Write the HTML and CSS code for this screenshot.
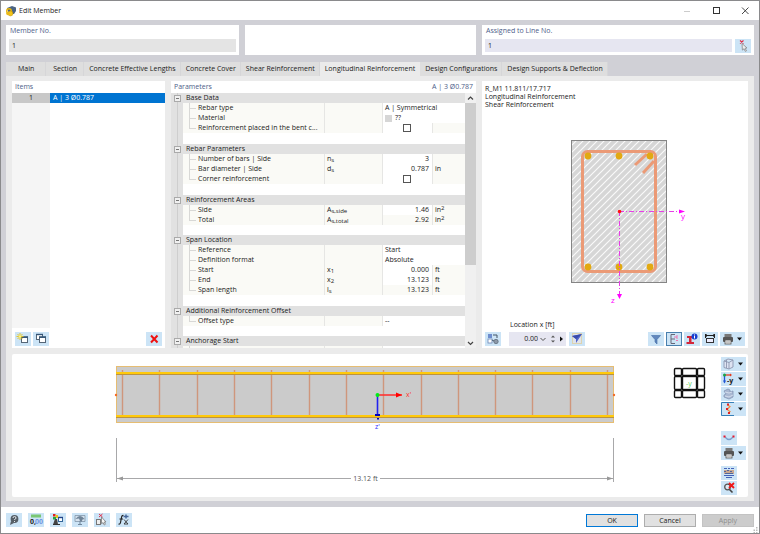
FILE: index.html
```html
<!DOCTYPE html>
<html lang="en">
<head>
<meta charset="utf-8">
<title>Edit Member</title>
<link rel="stylesheet" href="styles.css">
</head>
<body>
<svg class="defs" aria-hidden="true">
  <symbol id="printer" viewBox="0 0 16 14">
    <rect x="4.500" y="2" width="7" height="3" fill="#777"/>
    <rect x="3" y="5" width="10" height="5" rx="1" fill="#555"/>
    <rect x="5" y="8" width="6" height="4" fill="#eee" stroke="#555" stroke-width=".8"/>
    <path d="M6 10h4" stroke="#888" stroke-width=".8"/>
  </symbol>
  <symbol id="caret" viewBox="0 0 8 14"><path d="M1 5.500h5L3.500 8.500z" fill="#111"/></symbol>
  <symbol id="window" viewBox="0 0 16 14">
    <rect x="6.500" y="5.500" width="6" height="5" fill="#fff" stroke="#567" stroke-width="1"/>
    <path d="M6 5h7" stroke="#357" stroke-width="1.600"/>
  </symbol>
</svg>

<div class="dialog">
  <header class="titlebar">
    <svg class="app-icon" viewBox="0 0 12 12">
      <path d="M2 3L7 1l4 1.500V6L9 9H4z" fill="#4b6484"/>
      <circle cx="4" cy="6" r="2.300" fill="none" stroke="#e6b40a" stroke-width="1.400"/>
      <circle cx="5.500" cy="8.500" r="2.400" fill="#f2c418" stroke="#c99706" stroke-width=".6"/>
      <circle cx="3" cy="8.500" r="1.800" fill="#e9b91a"/>
    </svg>
    <h1>Edit Member</h1>
    <div class="window-buttons">
      <button aria-label="Minimize"><svg viewBox="0 0 10 10"><path d="M2 5.500h6" stroke="#ccc"/></svg></button>
      <button aria-label="Maximize"><svg viewBox="0 0 10 10"><rect x="2.500" y="1.500" width="6" height="6" fill="none" stroke="#333"/></svg></button>
      <button aria-label="Close"><svg viewBox="0 0 10 10"><path d="M2 1.500l6.500 6.500M8.500 1.500L2 8" stroke="#333" stroke-width=".9"/></svg></button>
    </div>
  </header>

  <main class="content">
    <div class="cards">
      <div class="card">
        <label for="member">Member No.</label>
        <div class="field-row"><input id="member" class="field" value="1" readonly></div>
      </div>
      <div class="card"></div>
      <div class="card">
        <label for="line">Assigned to Line No.</label>
        <div class="field-row">
          <input id="line" class="field editable" value="1">
          <button class="tool" aria-label="Pick line"><svg class="icon" viewBox="0 0 16 14"><path d="M5 1.500l3.500 3M8.500 1.500l-3.500 3" stroke="#e0304a" stroke-width="1.200"/><path d="M7 4.500l5 4.500-2 .3 1.500 2.500-1.200.6-1.300-2.600-1.600 1.300z" fill="#eee" stroke="#888" stroke-width=".8"/></svg></button>
        </div>
      </div>
    </div>

    <nav class="tabs">
      <a href="#main">Main</a>
      <a href="#section">Section</a>
      <a href="#lengths">Concrete Effective Lengths</a>
      <a href="#cover">Concrete Cover</a>
      <a href="#shear">Shear Reinforcement</a>
      <a href="#longitudinal" class="active" aria-current="page">Longitudinal Reinforcement</a>
      <a href="#configurations">Design Configurations</a>
      <a href="#supports">Design Supports &amp; Deflection</a>
    </nav>

    <div class="page">
      <div class="workspace">
        <section class="panel items">
          <div class="panel-head"><h2>Items</h2></div>
          <div class="item-list">
            <div class="item-row"><span class="item-no">1</span><span class="item-name">A | 3 Ø0.787</span></div>
            <div class="item-gutter"></div>
          </div>
          <div class="toolbar">
            <button class="tool" aria-label="New item"><svg class="icon" viewBox="0 0 16 14"><use href="#window"/><path d="M5 1v7M1.500 4.500h7M2.500 2l5 5M7.500 2l-5 5" stroke="#e3c21c" stroke-width=".9"/><circle cx="5" cy="4.500" r="1.300" fill="#fff27a"/></svg></button>
            <button class="tool" aria-label="Copy item"><svg class="icon" viewBox="0 0 16 14"><rect x="3.500" y="2.500" width="6" height="5" fill="#fff" stroke="#567"/><path d="M3 2.500h7" stroke="#357" stroke-width="1.400"/><use href="#window"/></svg></button>
            <span class="spacer"></span>
            <button class="tool" aria-label="Delete item"><svg class="icon" viewBox="0 0 16 14"><path d="M5 3.500l6.500 7M11.500 3.500L5 10.500" stroke="#ee1111" stroke-width="2"/></svg></button>
          </div>
        </section>

        <section class="panel params">
          <div class="panel-head"><h2>Parameters</h2><h2>A | 3 Ø0.787</h2></div>
          <div class="scroll">
            <div class="scroll-view">
            <table>
              <colgroup><col class="c-gutter"><col class="c-name"><col class="c-symbol"><col class="c-value"><col class="c-unit"></colgroup>
              <tbody>
                <tr class="group"><td><button class="toggle" aria-label="Collapse"></button></td><th colspan="4">Base Data</th></tr>
                <tr><td></td><td>Rebar type</td><td></td><td colspan="2" class="edit">A | Symmetrical</td></tr>
                <tr><td></td><td>Material</td><td></td><td colspan="2" class="edit"><span class="swatch"></span>??</td></tr>
                <tr class="last"><td></td><td><label for="bent">Reinforcement placed in the bent c...</label></td><td></td><td class="edit check"><input id="bent" type="checkbox"></td><td></td></tr>
                <tr class="gap"><td></td><td colspan="4"></td></tr>
              </tbody>
              <tbody>
                <tr class="group"><td><button class="toggle" aria-label="Collapse"></button></td><th colspan="4">Rebar Parameters</th></tr>
                <tr><td></td><td>Number of bars | Side</td><td>n<sub>s</sub></td><td class="edit num">3</td><td></td></tr>
                <tr><td></td><td>Bar diameter | Side</td><td>d<sub>s</sub></td><td class="edit num">0.787</td><td>in</td></tr>
                <tr class="last"><td></td><td><label for="corner">Corner reinforcement</label></td><td></td><td class="edit check"><input id="corner" type="checkbox"></td><td></td></tr>
                <tr class="gap"><td></td><td colspan="4"></td></tr>
              </tbody>
              <tbody>
                <tr class="group"><td><button class="toggle" aria-label="Collapse"></button></td><th colspan="4">Reinforcement Areas</th></tr>
                <tr><td></td><td>Side</td><td>A<sub>s,side</sub></td><td class="edit num">1.46</td><td>in<sup>2</sup></td></tr>
                <tr class="last"><td></td><td>Total</td><td>A<sub>s,total</sub></td><td class="num">2.92</td><td>in<sup>2</sup></td></tr>
                <tr class="gap short"><td></td><td colspan="4"></td></tr>
              </tbody>
              <tbody>
                <tr class="group"><td><button class="toggle" aria-label="Collapse"></button></td><th colspan="4">Span Location</th></tr>
                <tr><td></td><td>Reference</td><td></td><td colspan="2" class="edit">Start</td></tr>
                <tr><td></td><td>Definition format</td><td></td><td colspan="2" class="edit">Absolute</td></tr>
                <tr><td></td><td>Start</td><td>x<sub>1</sub></td><td class="edit num">0.000</td><td>ft</td></tr>
                <tr><td></td><td>End</td><td>x<sub>2</sub></td><td class="edit num">13.123</td><td>ft</td></tr>
                <tr class="last"><td></td><td>Span length</td><td>l<sub>s</sub></td><td class="num">13.123</td><td>ft</td></tr>
                <tr class="gap"><td></td><td colspan="4"></td></tr>
              </tbody>
              <tbody>
                <tr class="group"><td><button class="toggle" aria-label="Collapse"></button></td><th colspan="4">Additional Reinforcement Offset</th></tr>
                <tr class="last"><td></td><td>Offset type</td><td></td><td colspan="2" class="edit">--</td></tr>
                <tr class="gap short"><td></td><td colspan="4"></td></tr>
              </tbody>
              <tbody>
                <tr class="group"><td><button class="toggle" aria-label="Collapse"></button></td><th colspan="4">Anchorage Start</th></tr>
                <tr><td></td><td></td><td></td><td colspan="2" class="edit"></td></tr>
              </tbody>
            </table>
            </div>
            <div class="scrollbar">
              <svg viewBox="0 0 10 10"><path d="M3 6.500L5.500 4 8 6.500" fill="none" stroke="#444" stroke-width="1.200"/></svg>
              <div class="track"><div class="thumb"></div></div>
              <svg viewBox="0 0 10 10"><path d="M3 4L5.500 6.500 8 4" fill="none" stroke="#444" stroke-width="1.200"/></svg>
            </div>
          </div>
        </section>

        <section class="panel preview">
          <div class="caption">R_M1 11.811/17.717<br>Longitudinal Reinforcement<br>Shear Reinforcement</div>
          <svg class="section-view" viewBox="0 0 266 180" preserveAspectRatio="xMidYMin meet">
            <defs>
              <pattern id="hatch" width="7" height="7" patternUnits="userSpaceOnUse">
                <rect width="7" height="7" fill="#d6d6d6"/>
                <path d="M-1 1L1-1M-1 8L8-1M6 8L8 6" stroke="#fafafa" stroke-width="1.200"/>
              </pattern>
            </defs>
            <rect x="89.500" y="10.500" width="95" height="142" fill="url(#hatch)" stroke="#858585"/>
            <rect x="100.500" y="21.500" width="73" height="120" rx="5" fill="none" stroke="#eb9a76" stroke-width="3"/>
            <path d="M165 24L153 35M172 31L161 43" stroke="#eb9a76" stroke-width="3"/>
            <g fill="#e2a912">
              <circle cx="106" cy="26" r="3.400"/><circle cx="137" cy="26" r="3.400"/><circle cx="168" cy="26" r="3.400"/>
              <circle cx="106" cy="137" r="3.400"/><circle cx="137" cy="137" r="3.400"/><circle cx="168" cy="137" r="3.400"/>
            </g>
            <path d="M137 81.500h60M137.500 81v87" fill="none" stroke="#e83de8" stroke-dasharray="5 2 1 2"/>
            <path d="M197 79.500v4l6-2zM135 164h5l-2.500 5z" fill="#ff00ff"/>
            <circle cx="137.500" cy="81.500" r="1.800" fill="#ff1010"/>
            <text class="axis" x="199" y="89">y</text>
            <text class="axis" x="129" y="173">z</text>
          </svg>
          <label class="location-label" for="location">Location x [ft]</label>
          <div class="toolbar">
            <button class="tool" aria-label="Transfer"><svg class="icon" viewBox="0 0 16 14"><rect x="3" y="2" width="4" height="4" fill="#6d8dce"/><rect x="3" y="7" width="4" height="4" fill="#fff" stroke="#6c85b5" stroke-width=".8"/><path d="M8 3h4v3M7 8l2 1" stroke="#456" fill="none"/><circle cx="11" cy="9.500" r="2.200" fill="#8c98a8" stroke="#596575" stroke-width=".7"/></svg></button>
            <div class="spin">
              <input id="location" value="0.00">
              <button aria-label="Choose location"><svg viewBox="0 0 10 14"><path d="M2.500 6L5 8.500 7.500 6" fill="none" stroke="#555"/></svg></button>
              <button aria-label="Step location"><svg viewBox="0 0 10 14"><path d="M3 5.500L5 3.500l2 2zM3 8.500l2 2 2-2z" fill="#555"/></svg></button>
              <button aria-label="Next location" class="next"><svg viewBox="0 0 6 14"><path d="M1 4.500l3 2.500-3 2.500z" fill="#111"/></svg></button>
            </div>
            <button class="tool" aria-label="Pick location"><svg class="icon" viewBox="0 0 16 14"><rect x="3.500" y="1.500" width="9" height="10" fill="#dfe3ea" stroke="#ddd3b0"/><path d="M3 4l10-2-6 9V7z" fill="#5264c8"/><path d="M3 4l10-2-6 5z" fill="#384cae"/></svg></button>
            <span class="spacer"></span>
            <button class="tool" aria-label="Filter"><svg class="icon" viewBox="0 0 16 14"><path d="M3.500 3.500h9L9 7.500V12L7 10V7.500z" fill="#6187bd" stroke="#416da6" stroke-width=".6"/></svg></button>
            <button class="tool pressed" aria-label="Show reinforcement"><svg class="icon" viewBox="0 0 16 14"><path d="M9 2.500H5v9h4M5 7h4" fill="none" stroke="#667"/><path d="M8 5h3M11 3v4M10 8.500h2" stroke="#ee6aa5" stroke-width=".9"/></svg></button>
            <button class="tool" aria-label="Section information"><svg class="icon" viewBox="0 0 16 14"><path d="M3 4h6v2H7.500v4H10v2H2.500v-2H5V6H3z" fill="#d3263a"/><circle cx="10.500" cy="4.500" r="3" fill="#173fd0"/><path d="M10.500 2.500v1M10.500 4v2.500" stroke="#fff"/></svg></button>
            <button class="tool" aria-label="Dimensions"><svg class="icon" viewBox="0 0 16 14"><path d="M3.500 2v4M12.500 2v4M3.500 3.500h9" stroke="#222"/><path d="M5 2.500L3.500 3.500 5 4.500M11 2.500l1.500 1L11 4.500" fill="none" stroke="#222"/><rect x="4.500" y="6.500" width="7" height="4" fill="#eef" stroke="#333"/></svg></button>
            <button class="tool wide" aria-label="Print"><svg class="icon"><use href="#printer"/></svg><svg class="caret"><use href="#caret"/></svg></button>
          </div>
        </section>
      </div>

      <section class="panel viewport">
        <svg class="beam" viewBox="0 0 706 143">
          <rect x="104.500" y="12.500" width="497" height="56" fill="#cbcbcb" stroke="#e6bd72"/>
          <path d="M110.500 16v48M147.500 16v48M185.500 16v48M222.500 16v48M259.500 16v48M297.500 16v48M334.500 16v48M371.500 16v48M409.500 16v48M446.500 16v48M483.500 16v48M520.500 16v48M558.500 16v48M595.500 16v48" stroke="#cf967c" stroke-width="1.400"/>
          <path d="M104 19h498M104 62h498" stroke="#ffc90b" stroke-width="2"/>
          <path d="M104 20.500h498M104 63.500h498" stroke="#ba9343"/>
          <circle cx="104" cy="41" r="1.200" fill="#f36b26"/><circle cx="602" cy="41" r="1.200" fill="#f36b26"/>
          <path d="M366 41h24" stroke="#f33" stroke-width="1.600"/><path d="M384 38.500v5l6-2.500z" fill="#f00"/>
          <path d="M365.500 41v19" stroke="#22e" stroke-width="1.600"/><path d="M363 60h5v2h-5zM365 64h2v1.500h-2z" fill="#00b"/>
          <circle cx="365.500" cy="41" r="2" fill="#00ed16"/>
          <text class="x-axis" x="394" y="43">x'</text><text class="z-axis" x="363" y="75">z'</text>
          <path d="M104.500 84v44M601.500 84v44M105 124.500h234M368 124.500h233" stroke="#a8a8aa"/>
          <path d="M105 124.500l6-2v4zM601 124.500l-6-2v4z" fill="#999"/>
          <text class="dimension" x="353.500" y="127">13.12 ft</text>
          <g fill="#fff" stroke="#111" stroke-width="1.400">
            <rect x="662.500" y="14.500" width="7" height="7" rx="1"/><rect x="670.500" y="14.500" width="14" height="7" rx="1"/><rect x="685.500" y="14.500" width="7" height="7" rx="1"/>
            <rect x="662.500" y="22.500" width="7" height="13" rx="1"/><rect x="670.500" y="22.500" width="14" height="13"/><rect x="685.500" y="22.500" width="7" height="13" rx="1"/>
            <rect x="662.500" y="36.500" width="7" height="7" rx="1"/><rect x="670.500" y="36.500" width="14" height="7" rx="1"/><rect x="685.500" y="36.500" width="7" height="7" rx="1"/>
          </g>
          <text class="cube-label" x="674" y="32">-y</text>
        </svg>
        <div class="view-tools">
          <button class="tool wide" aria-label="View cube"><svg class="icon" viewBox="0 0 16 14"><path d="M3 4l4-2 5 1v7l-4 2-5-1.500zM3 4l5 1.500L12 3M8 5.500V12M5.500 3v8" fill="#dde3f2" stroke="#8d96b0" stroke-width=".9"/></svg><svg class="caret"><use href="#caret"/></svg></button>
          <button class="tool wide" aria-label="View direction"><svg class="icon" viewBox="0 0 16 14"><path d="M3.500 3.500v7" stroke="#2156d6" stroke-width="1.300"/><path d="M2 8.500h3l-1.500 3z" fill="#2156d6"/><path d="M4 3h6" stroke="#e43d20" stroke-width="1.300"/><circle cx="3.500" cy="3" r="1.500" fill="#17a54a"/><path d="M9 1.500v3l2-1.500z" fill="#e43d20"/><text class="icon-label" x="6" y="11">-y</text></svg><svg class="caret"><use href="#caret"/></svg></button>
          <button class="tool wide" aria-label="Display mode"><svg class="icon" viewBox="0 0 16 14"><path d="M3 4l4-2 2 1v2l3-1v6l-4 2-5-2V8l2-1z" fill="#a9b8d2" stroke="#8494b5" stroke-width=".8"/><path d="M4 5l4 1 3-1M4 9l4 1 4-2" fill="none" stroke="#dde5f2" stroke-width=".8"/></svg><svg class="caret"><use href="#caret"/></svg></button>
          <button class="tool wide" aria-label="Reinforcement display"><svg class="icon" viewBox="0 0 16 14"><path d="M13 .5H.5v13H13" fill="none" stroke="#3780b8"/><path d="M6 2.500l3 2-3 3 3 2-2 2" fill="none" stroke="#f18b40" stroke-width="1.200"/><path d="M6 1.500h2v2H6zM5 6h2v2H5zM7 10h2v2H7z" fill="#e02222"/></svg><svg class="caret"><use href="#caret"/></svg></button>
          <button class="tool break-lg" aria-label="Deformation"><svg class="icon" viewBox="0 0 16 14"><path d="M4 6q4 5 8 0" fill="none" stroke="#7ca0cf" stroke-width="1.300"/><path d="M2.500 4.500h2v2h-2zM11.500 4.500h2v2h-2z" fill="#e7192d"/></svg></button>
          <button class="tool wide" aria-label="Print view"><svg class="icon"><use href="#printer"/></svg><svg class="caret"><use href="#caret"/></svg></button>
          <button class="tool break" aria-label="Result diagrams"><svg class="icon" viewBox="0 0 16 14"><path d="M3 2.500h3M7 2.500h2M10 2.500h3M3 9.500h10M5 11.500h6" stroke="#4362b9"/><path d="M3 4h10v4H3z" fill="#c8a891"/><path d="M3 5.500h2M6 4.500h2M9 5.500h2M4 7.500h8" stroke="#52659b"/></svg></button>
          <button class="tool" aria-label="Reset view"><svg class="icon" viewBox="0 0 16 14"><circle cx="6.500" cy="6" r="2.800" fill="#dfe9f5" stroke="#555" stroke-width="1.300"/><path d="M8.500 8.500l3 3" stroke="#444" stroke-width="1.600"/><path d="M8 2l5 5M13 2L8 7" stroke="#ef1717" stroke-width="1.800"/></svg></button>
        </div>
      </section>
    </div>
  </main>

  <footer class="footer">
    <div class="footer-tools">
      <button class="tool" aria-label="Help"><svg class="icon" viewBox="0 0 16 14"><circle cx="8.500" cy="6" r="3.900" fill="#555e66"/><path d="M5 8l-1 4 4-2z" fill="#555e66"/><path d="M7 5q0-1.500 1.500-1.500T10 5q0 1-1.500 1.500V7M8.500 8v1" fill="none" stroke="#e5e9ed"/></svg></button>
      <button class="tool" aria-label="Units"><svg class="icon" viewBox="0 0 16 14"><path d="M3 1.500h10v3H3z" fill="#79c774"/><text class="icon-label" x="2" y="11">0,</text><text class="icon-label blue" x="7" y="11">00</text></svg></button>
      <button class="tool" aria-label="Display properties"><svg class="icon" viewBox="0 0 16 14"><path d="M3 1h2.500v2.500H3z" fill="#e02020"/><path d="M5.500 2H8v3H5.500z" fill="#e7c41b"/><path d="M3 4h3v2.500H3z" fill="#22a842"/><path d="M5 6h2l1 5.500H3z" fill="#444"/><path d="M3 11.500h7" stroke="#333"/><rect x="8.500" y="4.500" width="4" height="4" fill="#fff" stroke="#369"/><path d="M8 4.500h5" stroke="#248" stroke-width="1.400"/></svg></button>
      <button class="tool" aria-label="View options"><svg class="icon" viewBox="0 0 16 14"><path d="M3 2.500h10v6H3z" fill="#d5e2ee" stroke="#8297aa" stroke-width=".8"/><path d="M3.500 6q4.500-6 9 0l-2 .5-1 2.500-1.500-1-1-2.500z" fill="#6f8498"/><path d="M8 8v3M6 11.500h4" stroke="#71879c"/></svg></button>
      <button class="tool" aria-label="Clear selection"><svg class="icon" viewBox="0 0 16 14"><path d="M5 1l3.500 3M8.500 1L5 4" stroke="#e0304a"/><rect x="2.500" y="6.500" width="4" height="5" fill="#eee" stroke="#777"/><path d="M7.500 4l4.500 5-2 .2 1.500 2-1.200.8-1.300-2.300-1.500 1z" fill="#f5f5f5" stroke="#777" stroke-width=".8"/></svg></button>
      <button class="tool" aria-label="Formula"><svg class="icon" viewBox="0 0 16 14"><path d="M7.500 2.500q-1.500-.5-2 2l-1 5q-.4 2-2 1.500M3.500 6h3.500" fill="none" stroke="#222" stroke-width="1.200"/><path d="M8 6.500l4 4.500M12 6.500l-4 4.500M8 11h4" stroke="#333" stroke-width=".9"/><path d="M7.500 3.500h5M10 1.500v4" stroke="#47679a" stroke-width="1.500"/></svg></button>
    </div>
    <div class="actions">
      <button class="action default">OK</button>
      <button class="action">Cancel</button>
      <button class="action" disabled>Apply</button>
    </div>
    <svg class="grip" viewBox="0 0 6 6"><path d="M4 0h1.500v1.500H4zM4 2.500h1.500V4H4zM1.500 2.500H3V4H1.500zM4 5h1.500v1H4zM1.500 5H3v1H1.500z" fill="#bbb"/></svg>
  </footer>
</div>
</body>
</html>
```
FILE: styles.css
```css
* { box-sizing: border-box; }

body {
  margin: 0;
  font: 7px/10px "Open Sans", "Noto Sans", sans-serif;
  color: #1a1a1a;
}

h1, h2 { margin: 0; font-size: 7px; font-weight: 400; }
button, input { font: inherit; color: inherit; margin: 0; border: 0; padding: 0; }
svg { display: block; }
.defs { position: absolute; width: 0; height: 0; }

.dialog {
  display: flex;
  flex-direction: column;
  height: 100vh;
  min-height: 534px;
  border: 1px solid #8a8a8c;
  background: #fff;
}

/* Title bar */
.titlebar { display: flex; align-items: center; height: 19px; padding: 0 9px 0 4px; gap: 2px; }
.titlebar h1 { flex: 1; }
.app-icon { width: 12px; height: 12px; }
.window-buttons { display: flex; gap: 19px; }
.window-buttons button { width: 10px; height: 10px; background: none; }

/* Cards above the tabs */
.content {
  display: flex;
  flex-direction: column;
  flex: 1;
  min-height: 0;
  padding: 5px 5px 6px;
  background: #d0d0d6;
}
.cards { display: grid; grid-template-columns: 233fr 231fr 272fr; gap: 6px; }
.card { height: 30px; padding: 1px 3px 3px; background: #fff; }
.card label, h2 { color: #4d6089; }
.card label { display: block; padding-left: 1px; }
.field-row { display: flex; align-items: flex-start; gap: 3px; padding-top: 3px; }
.field { flex: 1; min-width: 0; height: 13px; padding: 0 3px; background: #e4e4e4; }
.field.editable { background: #e6e6f1; }

/* Tabs */
.tabs { display: flex; margin-top: 7px; }
.tabs a {
  padding: 0 5px;
  line-height: 14px;
  color: inherit;
  text-decoration: none;
  background: #dedede;
  box-shadow: inset -1px 0 #d6d6d8;
}
.tabs a:first-child { padding: 0 12px; }
.tabs a:nth-child(2) { padding: 0 7px; }
.tabs a.active { background: #ebebeb; box-shadow: none; }

.page {
  display: flex;
  flex-direction: column;
  gap: 6px;
  flex: 1;
  min-height: 0;
  padding: 5px 6px 4px;
  background: #ebebeb;
}
.workspace {
  display: grid;
  grid-template-columns: 153fr 305fr 266fr;
  grid-template-rows: minmax(0, 1fr);
  gap: 6px;
  flex: 1;
  min-height: 0;
}
.panel { background: #fff; min-width: 0; }
.panel-head { display: flex; justify-content: space-between; height: 12px; padding: 1px 3px 0; }

/* Buttons */
.tool {
  display: flex;
  flex: none;
  width: 16px;
  height: 14px;
  background: #cce4f6;
}
.tool.wide { width: 25px; }
.tool.pressed { outline: 1px solid #4a80ae; outline-offset: -1px; }
.icon { width: 16px; height: 14px; }
.caret { width: 8px; height: 14px; }
.toolbar { display: flex; gap: 2px; padding: 0 3px 2px; }
.spacer { flex: 1; }

/* Item list */
.items { display: flex; flex-direction: column; }
.item-list { display: flex; flex-direction: column; flex: 1; margin-bottom: 4px; }
.item-row { display: grid; grid-template-columns: 38px 1fr; }
.item-no { text-align: center; background: #c8c8c8; }
.item-name { padding-left: 3px; color: #fff; background: #0074d1; }
.item-gutter { flex: 1; width: 38px; background: #f5f5f5; }

/* Parameter tree */
.params { display: flex; flex-direction: column; }
.scroll { display: flex; flex: 1; min-height: 0; }
.scroll-view { flex: 1; overflow: hidden; }
table { width: 100%; border-collapse: collapse; table-layout: fixed; }
.c-gutter { width: 12px; }
.c-symbol { width: 58px; }
.c-value { width: 50px; }
.c-unit { width: 33px; }
tr { height: 10px; }
td, th { padding: 0 0 0 3px; height: 10px; line-height: 10px; font-weight: 400; text-align: left; white-space: nowrap; overflow: hidden; background: #fafaf6; }
td:nth-child(n+3) { box-shadow: inset 1px 0 #e6e6e4; }
td:first-child { padding: 0; background: linear-gradient(#cecece, #cecece) 6px 0 / 1px 100% no-repeat #e1e1e1; }
tr:not(.group):not(.gap) td:nth-child(2) {
  padding-left: 15px;
  background:
    linear-gradient(#d8d8d6, #d8d8d6) 6px 0 / 1px 100% no-repeat,
    linear-gradient(#d8d8d6, #d8d8d6) 6px 5px / 7px 1px no-repeat #fafaf6;
}
tr.last:not(.group):not(.gap) td:nth-child(2) { background-size: 1px 5px, 7px 1px; }
tr td.edit { background: #fff; }
.group th { background: #e1e1e1; }
.gap td { height: 11px; }
.gap.short td { height: 10px; }
.gap td:nth-child(2) { background: #fff; }
td.num { text-align: right; padding-right: 3px; }
td.check { text-align: center; padding: 0; }
.check input { appearance: none; display: block; width: 8px; height: 8px; margin: 0 auto; border: 1px solid #555; background: #fff; }
.swatch { display: inline-block; width: 7px; height: 7px; margin-right: 3px; background: #d6d6d6; vertical-align: middle; }
sub, sup { font-size: 6px; line-height: 0; }
sub { vertical-align: -1px; }
sup { vertical-align: 2px; }
.toggle {
  display: block;
  width: 7px;
  height: 7px;
  margin: 0 3px;
  border: 1px solid #aaa;
  background: linear-gradient(#777, #777) 1px 2px / 3px 1px no-repeat #f0f0f0;
}
.scrollbar { display: flex; flex-direction: column; width: 11px; background: #f0f0f0; }
.scrollbar svg { width: 10px; height: 10px; }
.track { flex: 1; }
.thumb { height: 69%; background: #cdcdcd; }

/* Section preview */
.preview { display: flex; flex-direction: column; }
.caption { padding: 4px 3px 0; line-height: 8px; }
.section-view { flex: 1; min-height: 0; width: 100%; margin-top: 21px; }
.axis { font-size: 8px; fill: #f0f; }
.location-label { padding-left: 28px; margin-bottom: 2px; }
.spin { display: flex; width: 57px; height: 14px; margin: 0 1px 0 6px; background: #e6e6f1; }
.spin input { flex: 1; min-width: 0; text-align: right; background: none; }
.spin button { width: 10px; background: none; }
.spin .next { width: 8px; }
.spin svg { width: 100%; height: 14px; }

/* Member view */
.viewport { display: flex; flex: none; border-radius: 2px; }
.beam { flex: 1; min-width: 0; height: 143px; }
.view-tools { display: flex; flex-direction: column; gap: 1px; width: 30px; padding: 3px 3px 0; }
.break-lg { margin-top: 14px; }
.break { margin-top: 5px; }
.x-axis { font-size: 7px; fill: #f33; }
.z-axis { font-size: 7px; fill: #33f; }
.dimension { font-size: 7px; fill: #555; text-anchor: middle; }
.cube-label { font-size: 7px; fill: #62d060; }
.icon-label { font-size: 7px; font-weight: 700; fill: #222; }
.icon-label.blue { fill: #7196e0; }

/* Footer */
.footer { display: flex; justify-content: space-between; height: 26px; padding: 6px 1px 0 5px; }
.footer-tools { display: flex; gap: 6px; flex: 1; }
.actions { display: flex; gap: 6px; padding: 1px 3px 0 0; }
.action { width: 52px; height: 13px; border: 1px solid #adadad; background: #e1e1e1; }
.action.default { border-color: #0078d7; outline: 1px solid #0078d7; outline-offset: -1px; }
.action:disabled { color: #8e8e8e; border-color: #c3c3c3; background: #ccc; }
.grip { width: 6px; height: 6px; align-self: flex-end; margin-left: -5px; }
```
